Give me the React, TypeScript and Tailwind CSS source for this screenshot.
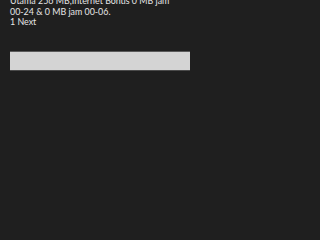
export default function App() {
  return (
    <div className="min-h-screen w-full overflow-hidden bg-[#1f1f1f] font-['Lato',sans-serif]">
      <div className="w-[200px]">
        <div className="-mt-[4px] px-[10px] text-[8.9px] leading-[10.5px] text-[#e6e6e6]">
          <p>Utama 256 MB,Internet Bonus 0 MB jam</p>
          <p>00-24 &amp; 0 MB jam 00-06.</p>
          <p>1 Next</p>
        </div>
        <div className="mx-[10px] mt-[23px] h-[20px] border-t border-b border-t-[#5a5a5a] border-b-[#4a4a4a] bg-[#d4d4d4]" />
      </div>
    </div>
  );
}
